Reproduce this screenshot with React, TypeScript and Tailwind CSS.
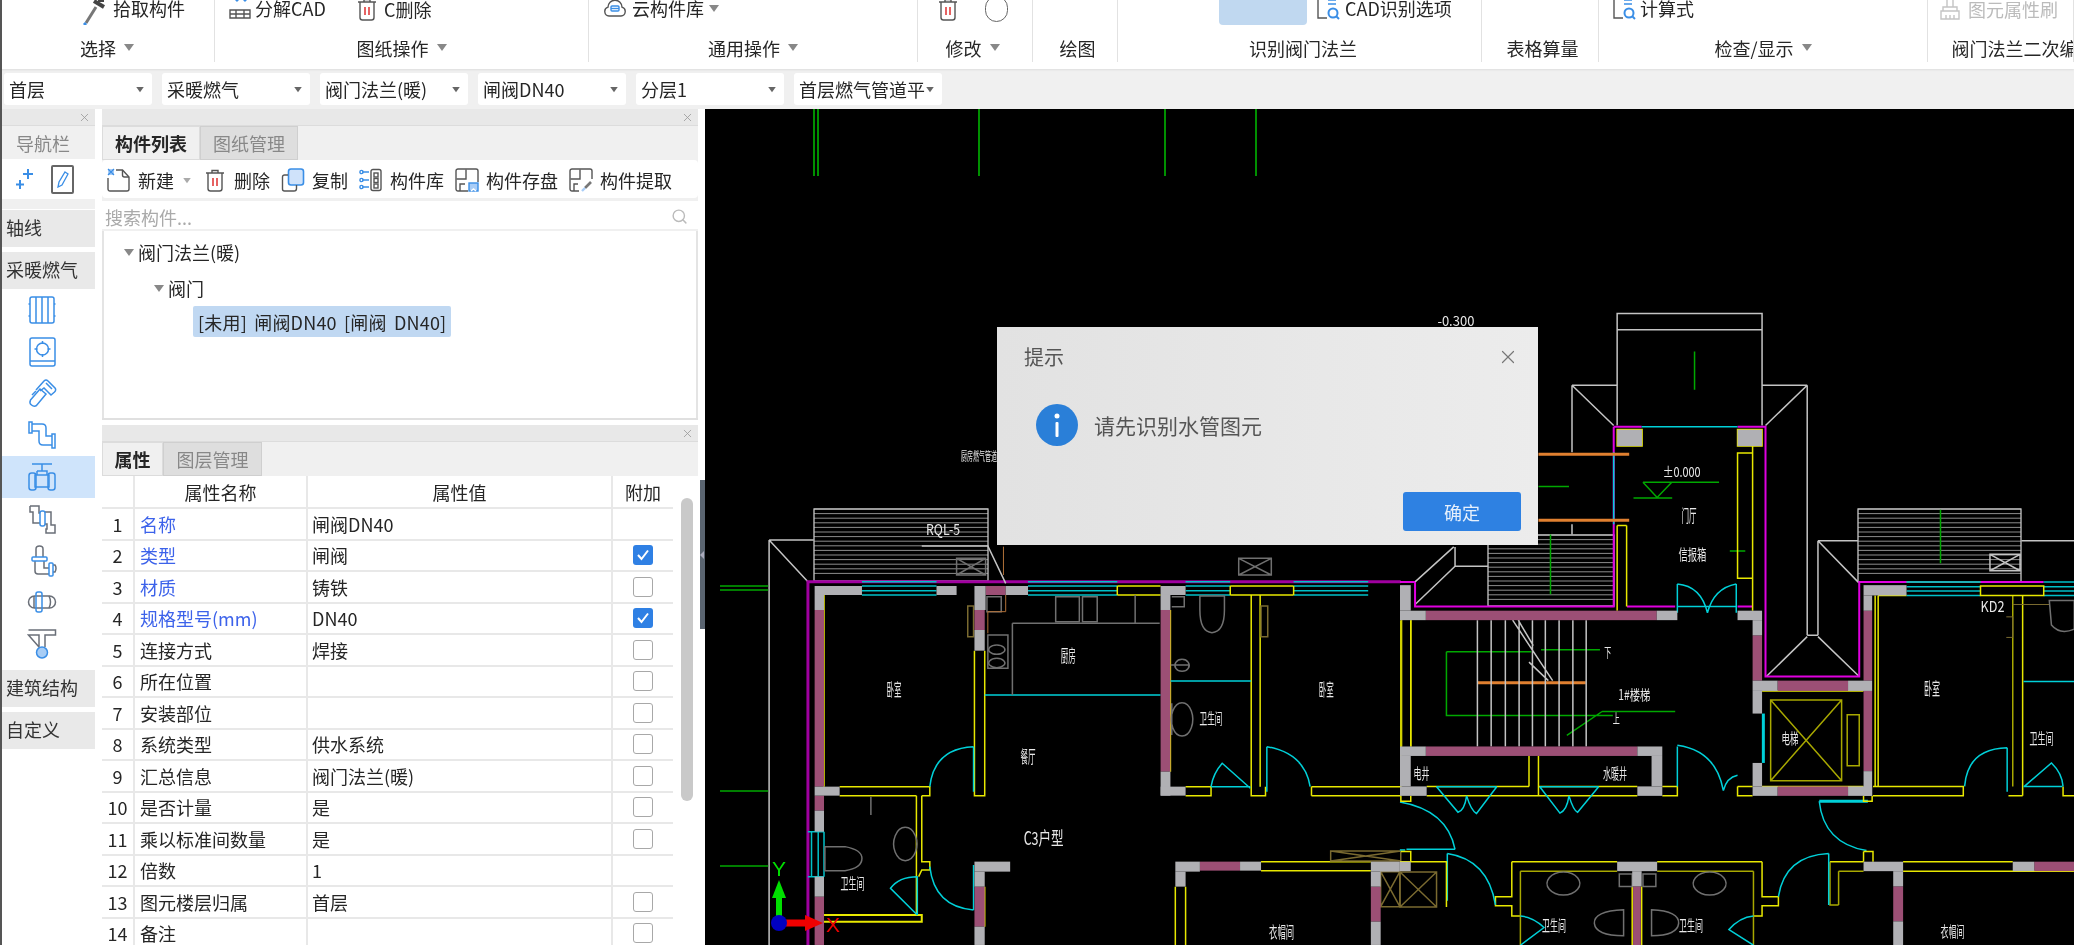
import { Search, X } from 'lucide-react';
import type { ReactNode } from 'react';

const BLUE = '#3a8ee6';
const INK = '#555';
const PIPE = '#6a6f78';

const SELECTORS = ['首层', '采暖燃气', '阀门法兰(暖)', '闸阀DN40', '分层1', '首层燃气管道平'];

const GROUPS = [
  { label: '选择', width: 215, arrow: true, cls: '' },
  { label: '图纸操作', width: 374, arrow: true, cls: '' },
  { label: '通用操作', width: 329, arrow: true, cls: '' },
  { label: '修改', width: 115, arrow: true, cls: 'pr-[5px]' },
  { label: '绘图', width: 85, arrow: false, cls: 'pl-[5px]' },
  { label: '识别阀门法兰', width: 364, arrow: false, cls: 'pl-[7px]' },
  { label: '表格算量', width: 117, arrow: false, cls: 'pl-[5px]' },
  { label: '检查/显示', width: 329, arrow: true, cls: '' },
  { label: '阀门法兰二次编辑', width: 146, arrow: false, cls: 'pl-[46px]' },
];

const ROWS: { name: string; value: string; link?: boolean; check?: boolean | null }[] = [
  { name: '名称', value: '闸阀DN40', link: true, check: null },
  { name: '类型', value: '闸阀', link: true, check: true },
  { name: '材质', value: '铸铁', link: true, check: false },
  { name: '规格型号(mm)', value: 'DN40', link: true, check: true },
  { name: '连接方式', value: '焊接', check: false },
  { name: '所在位置', value: '', check: false },
  { name: '安装部位', value: '', check: false },
  { name: '系统类型', value: '供水系统', check: false },
  { name: '汇总信息', value: '阀门法兰(暖)', check: false },
  { name: '是否计量', value: '是', check: false },
  { name: '乘以标准间数量', value: '是', check: false },
  { name: '倍数', value: '1', check: null },
  { name: '图元楼层归属', value: '首层', check: false },
  { name: '备注', value: '', check: false },
];

function Arrow({ className = 'border-t-[#888]' }: { className?: string }) {
  return <span className={`inline-block w-0 h-0 border-x-[5px] border-x-transparent border-t-[7px] ${className}`} />;
}

function Glyph({ size = 24, children }: { size?: number; children: ReactNode }) {
  return (
    <svg width={size} height={size} viewBox="0 0 24 24" fill="none" stroke={INK} strokeWidth="1.4" className="shrink-0">
      {children}
    </svg>
  );
}

// ribbon and toolbar icons
const TrashIcon = ({ size = 24 }: { size?: number }) => (
  <Glyph size={size}>
    <path d="M3 5h18M9 5V2.500h6V5M5 5v15.500A2.500 2.500 0 0 0 7.500 23h9a2.500 2.500 0 0 0 2.500-2.500V5" />
    <path d="M10 10v8M14 10v8" stroke="#e03c3c" strokeWidth="1.600" />
  </Glyph>
);

const NewIcon = () => (
  <Glyph>
    <path d="M9 2h6.500L22 9v12a2 2 0 0 1-2 2H3a2 2 0 0 1-2-2V10" />
    <path d="M15.500 2v5a2 2 0 0 0 2 2H22" />
    <rect x="1" y="1" width="6" height="6" fill="#a9cdf7" stroke="none" />
    <path d="M1 1l6 6M7 1L1 7" stroke={BLUE} strokeWidth="1.200" />
  </Glyph>
);

const CopyIcon = () => (
  <Glyph>
    <rect x="7.500" y="1" width="15" height="16" rx="2.500" fill="#cfe2fa" stroke={BLUE} strokeWidth="1.600" />
    <path d="M7 7H3.500A2 2 0 0 0 1.500 9v12a2 2 0 0 0 2 2H13a2.500 2.500 0 0 0 2.500-2.500V17" />
  </Glyph>
);

const LibraryIcon = () => (
  <Glyph>
    <rect x="12" y="1.500" width="10" height="21" rx="2" />
    <rect x="15" y="5" width="4" height="4" />
    <rect x="15" y="10.500" width="4" height="4" />
    <rect x="15" y="16" width="4" height="4" />
    <path d="M3 4h7M3 12h7M3 19h7" stroke={BLUE} strokeWidth="1.600" />
    <circle cx="2.500" cy="4" r="1.600" stroke={BLUE} />
    <circle cx="2.500" cy="12" r="1.600" stroke={BLUE} />
    <circle cx="2.500" cy="19" r="1.600" stroke={BLUE} />
  </Glyph>
);

const SaveIcon = () => (
  <Glyph>
    <path d="M13 23H3a2 2 0 0 1-2-2V3a2 2 0 0 1 2-2h18a2 2 0 0 1 2 2v11" />
    <path d="M1.500 11H11V1.500M5 23v-7h5" />
    <rect x="14" y="15" width="9" height="8" fill="#a9cdf7" stroke={BLUE} />
    <path d="M16 23l2.500-2 2.500 2" stroke="#fff" />
  </Glyph>
);

const PickIcon = () => (
  <Glyph>
    <path d="M10 23H3a2 2 0 0 1-2-2V3a2 2 0 0 1 2-2h18a2 2 0 0 1 2 2v8" />
    <path d="M1.500 11H11V1.500M5 23v-7h4" />
    <path d="M22 14l-6 6" strokeWidth="2.600" stroke="#777" />
    <path d="M16 20l-3 3" stroke="#a9cdf7" strokeWidth="2.400" />
  </Glyph>
);

const PickerIcon = () => (
  <svg width="26" height="34" viewBox="0 0 26 34" fill="none" className="shrink-0">
    <path d="M14 16L4 32" stroke="#777" strokeWidth="3" />
    <path d="M4 32l-2 2" stroke={BLUE} strokeWidth="3" />
    <path d="M12 10l10 6" stroke="#444" strokeWidth="4" />
    <path d="M16 4h6v7h-6z" fill="#444" />
  </svg>
);

const ExplodeIcon = () => (
  <Glyph>
    <path d="M2 14h20v8H2zM2 18h20M8 14v8M16 14v8" />
    <path d="M6 2l3 3 3-3M14 2l3 3 3-3" stroke={BLUE} />
  </Glyph>
);

const CloudIcon = () => (
  <Glyph>
    <path d="M6 20a4.500 4.500 0 0 1-1-8.800 7 7 0 0 1 14 0 4.500 4.500 0 0 1-1 8.800z" />
    <rect x="8" y="10" width="8" height="5" rx="1" stroke={BLUE} />
    <path d="M8 12.500h8" stroke={BLUE} />
  </Glyph>
);

const CadIcon = () => (
  <Glyph>
    <path d="M9 2H2v20h9" />
    <circle cx="17" cy="17" r="4.500" stroke={BLUE} strokeWidth="2" />
    <path d="M20 20l3 3" stroke={BLUE} strokeWidth="2" />
    <path d="M12 4h8M12 8h8" stroke={BLUE} strokeWidth="1.600" />
  </Glyph>
);

const BrushIcon = () => (
  <Glyph>
    <path d="M9 2h6v8H9zM3 14h18v8H3zM5 10h14v4H5zM8 18v4M12 18v4M16 18v4" stroke="#c4c4c4" />
  </Glyph>
);

function NavIcon({ children }: { children: ReactNode }) {
  return (
    <svg width="30" height="32" viewBox="0 0 30 32" fill="none" stroke={BLUE} strokeWidth="1.500" className="shrink-0">
      {children}
    </svg>
  );
}

const NAV_ICONS: ReactNode[] = [
  <NavIcon key="radiator">
    <rect x="3" y="3" width="24" height="26" rx="2" />
    <path d="M9 3v26M15 3v26M21 3v26M1.500 10H3M1.500 22H3M27 10h1.500M27 22h1.500" />
  </NavIcon>,
  <NavIcon key="boiler">
    <rect x="3" y="2" width="25" height="28" rx="2" />
    <path d="M3 25h25" />
    <circle cx="15.500" cy="13" r="6" />
    <path d="M15.500 5v3M15.500 18v3M7.500 13h3M20.500 13h3" />
  </NavIcon>,
  <NavIcon key="wrench">
    <path d="M3.500 23L13 12l6 5-9.500 11.500Q7 30 4.500 28T3.500 23Z" />
    <path d="M9 13l8-9q2-2 4 0l7 7q1.500 2-.5 4L24 18l-7-7-4 3" />
    <path d="M19 6l6 6M5 18l4-4" />
  </NavIcon>,
  <NavIcon key="pipe">
    <rect x="2" y="3" width="3" height="11" />
    <rect x="25" y="15" width="3" height="14" />
    <path d="M5 5h10q4 0 4 4v8h6M5 12h7v10q0 4 4 4h9" />
  </NavIcon>,
  <NavIcon key="valve">
    <path d="M5 3h20M15 3v7M10 10h10v4" />
    <path d="M10 10v4" />
    <path d="M8 14h14v12H8z" />
    <rect x="2" y="12" width="7" height="17" rx="2.500" />
    <rect x="21" y="12" width="7" height="17" rx="2.500" />
  </NavIcon>,
  <NavIcon key="double">
    <path d="M3 3h9v7h1M3 3v6h3v11h7M18 9h6v13h4v8h-9v-4h1v-5h-2" stroke={PIPE} />
    <rect x="13" y="8" width="5" height="15" rx="2" />
  </NavIcon>,
  <NavIcon key="elbow">
    <path d="M9 12V4q0-3 3.500-3T16 4v8" stroke={PIPE} />
    <path d="M8 16v10q0 3 3 3h11M17 16v7h5M26 20h2q2 3 0 7h-2" stroke={PIPE} />
    <rect x="5" y="12" width="15" height="4" rx="1" />
    <rect x="22" y="18" width="4" height="13" rx="1" />
  </NavIcon>,
  <NavIcon key="coupling">
    <rect x="1.500" y="10" width="27" height="12" rx="6" stroke={PIPE} />
    <path d="M7 10v12M22 10q3 6 0 12" stroke={PIPE} />
    <rect x="9" y="6" width="6" height="20" rx="2" />
  </NavIcon>,
  <NavIcon key="tee">
    <path d="M1.500 2h27v5H18v12M12 19V7H1.500z" stroke={PIPE} />
    <circle cx="15" cy="24.500" r="5.500" fill="#a8cdf5" />
  </NavIcon>,
];

function PanelClose() {
  return (
    <div className="h-[17px] flex items-center justify-end pr-[4px] bg-[#e8e8e8] border-b border-[#dcdcdc] shrink-0">
      <X size={13} strokeWidth={1.5} className="text-[#999]" />
    </div>
  );
}

function NavGroup({ label }: { label: string }) {
  return <div className="h-[37px] mb-[5px] pl-[4px] pb-[3px] flex items-center bg-[#e9e9e9] text-[#333]">{label}</div>;
}

function ToolItem({ icon, label, arrow }: { icon: ReactNode; label: string; arrow?: boolean }) {
  return (
    <div className="flex items-center gap-[7px] whitespace-nowrap">
      {icon}
      <span>{label}</span>
      {arrow && <Arrow className="ml-[1px] border-t-[#aaa] scale-75" />}
    </div>
  );
}

function Checkbox({ checked }: { checked: boolean }) {
  if (checked) {
    return (
      <span className="w-[20px] h-[20px] rounded-[3px] bg-[#2f80e4] flex items-center justify-center">
        <svg width="14" height="14" viewBox="0 0 14 14" fill="none" stroke="#fff" strokeWidth="2">
          <path d="M2 7l3.500 4L12 2.500" />
        </svg>
      </span>
    );
  }
  return <span className="w-[20px] h-[20px] rounded-[3px] bg-white border border-[#a8a8a8]" />;
}

/* ---- CAD drawing, coordinates are read off the two magnified crops ---- */

type Rect = [number, number, number, number];
type Stroke = [string, string, number?];

const YEL = '#e8e800';
const DIM = '#a8a800';
const CYN = '#00d0d8';
const TEAL = '#00c0c8';
const PUR = '#a000a0';
const MAG = '#e000e0';
const WHT = '#c4c4c4';
const GRY = '#707070';
const GRN = '#00a800';
const ORG = '#e08030';
const BRN = '#7a6a30';

const windowBand = (a: number, b: number, ys: number[]): Stroke[] =>
  ys.map((y) => [TEAL, `M${a} ${y}H${b}`, 1.5] as Stroke);

const cross = (a: number, b: number, c: number, d: number) => `M${a} ${b}H${c}V${d}H${a}ZM${a} ${b}L${c} ${d}M${c} ${b}L${a} ${d}`;

const LOWER_GREY: Rect[] = [
  [212, 168, 318, 195], [212, 195, 233, 240], [485, 168, 530, 195], [570, 168, 595, 240], [640, 168, 690, 195],
  [570, 300, 593, 362], [987, 168, 1043, 195], [987, 195, 1009, 240], [987, 725, 1009, 797], [987, 770, 1043, 797],
  [212, 770, 268, 797], [212, 842, 233, 905], [212, 1040, 233, 1100], [570, 995, 650, 1025], [570, 1025, 593, 1070],
  [570, 1190, 593, 1245], [1020, 995, 1075, 1025], [1020, 1025, 1043, 1070], [1165, 995, 1212, 1022],
  [1458, 995, 1523, 1025], [1458, 1025, 1480, 1070], [1458, 1175, 1480, 1245],
];
const LOWER_MAUVE: Rect[] = [
  [212, 240, 233, 770], [212, 797, 233, 842], [212, 1100, 233, 1245], [595, 168, 640, 195], [570, 240, 593, 300],
  [987, 240, 1009, 725], [570, 1070, 593, 1190], [1075, 995, 1165, 1022], [1458, 1070, 1480, 1175],
];
const LOWER_LINES: Stroke[] = [
  [WHT, 'M110 30V1245M110 30H210M110 30L197 155'],
  [GRN, 'M0 168H108M0 180H108M0 783H108M0 1008H108'],
  [PUR, 'M197 1245V155H1525', 3],
  ...windowBand(318, 485, [155, 168, 182, 195]),
  ...windowBand(690, 890, [155, 168, 182, 195]),
  ...windowBand(1043, 1143, [155, 168, 182, 195]),
  ...windowBand(1285, 1452, [155, 168, 182, 195]),
  [TEAL, 'M197 905H233M197 1040H233M205 905V1040M220 905V1040M233 905V1040', 1.5],
  [YEL, 'M890 168H987M890 195H987M890 168V195M1143 168H1285M1143 195H1285M1143 168V195M1285 168V195'],
  [YEL, 'M233 195V770M570 362V797H593V362M1190 195V797H1222V770M1210 195V770M1009 240V725'],
  [YEL, 'M268 770H470V797H452M268 797H440M440 797V1155M452 797V995H470V1020H452L445 1040'],
  [YEL, 'M1043 770H1100V797H1043M1325 770H1525M1325 797H1525M1325 770V797'],
  [YEL, 'M233 1155H452V1175H233', 2],
  [YEL, 'M1212 995H1458M1212 1022H1458M1020 1070V1245M1043 1070V1245M593 1070V1190'],
  [DIM, 'M1527 270V650M1548 270V650'],
  [CYN, 'M568 650Q480 655 470 770M568 650V785M1225 650Q1310 670 1322 770M1225 650V785'],
  [CYN, 'M1100 770Q1105 730 1125 700L1188 775M1100 770H1188M593 495H987M1009 453H1190', 1.500],
  [CYN, 'M443 1040Q400 1040 382 1075L442 1155M442 1040V1155M470 1010Q480 1130 568 1140M568 1005V1140'],
  [GRY, 'M655 280H985M655 280V495M930 195V280'],
  [GRY, 'M600 315H645V415H600ZM752 200H805V275H752ZM812 200H845V275H812ZM598 200H630V245H598ZM1012 200H1040V230H1012'],
  [GRY, 'M620 345a18 14 0 1 0 .1 0M620 385a18 14 0 1 0 .1 0M338 800V855'],
  [GRY, 'M1075 198H1130V240Q1130 305 1102 308Q1075 305 1075 240Z'],
  [GRY, 'M1035 388a16 18 0 1 0 .1 0M1010 405H1050'],
  [GRY, 'M1035 518a24 50 0 1 0 .1 0M1012 520V615'],
  [GRY, 'M415 892a26 50 0 1 0 .1 0M235 950H280Q318 960 318 985Q318 1015 280 1022H235Z'],
  [BRN, 'M555 228H568V320H555ZM1212 228H1227V320H1212ZM1368 963H1525V993H1368ZM1368 963L1525 993M1525 963L1368 993'],
  [BRN, cross(1480, 1025, 1523, 1130)],
  ['#b07038', 'M635 50V135M640 195V245H600V310', 1],
  [GRY, cross(530, 85, 595, 135)],
  [GRY, cross(1162, 85, 1235, 135)],
  [WHT, 'M452 48H600L640 160'],
  [CYN, 'M1535 960H1523'],
];

const RIGHT_GREY: Rect[] = [
  [0, 693, 25, 755], [0, 755, 60, 778], [597, 755, 645, 778], [785, 755, 842, 778], [820, 778, 842, 815],
  [820, 925, 878, 950], [820, 950, 842, 1005], [1042, 925, 1098, 950], [1078, 693, 1178, 718], [1078, 718, 1098, 755],
  [1078, 1145, 1098, 1205], [1042, 1182, 1098, 1205], [820, 1125, 842, 1182], [820, 1182, 878, 1205],
  [0, 1085, 60, 1108], [552, 1085, 610, 1108], [585, 1108, 610, 1182], [552, 1182, 610, 1205], [0, 1108, 25, 1182],
  [0, 1182, 62, 1205], [505, 315, 563, 355], [785, 315, 842, 355], [1078, 1365, 1170, 1388], [1147, 1388, 1170, 1425],
  [1147, 1510, 1170, 1568], [1425, 1365, 1475, 1388], [505, 1365, 598, 1388], [540, 1388, 562, 1425], [0, 1365, 25, 1388],
];
const RIGHT_MAUVE: Rect[] = [
  [60, 755, 597, 778], [820, 815, 842, 925], [878, 925, 1042, 950], [1078, 755, 1098, 925], [1078, 950, 1098, 1145],
  [878, 1182, 1042, 1205], [60, 1085, 552, 1108], [1147, 1425, 1170, 1510], [1475, 1365, 1568, 1388], [542, 1425, 560, 1568],
];
const RIGHT_LINES: Stroke[] = [
  [WHT, 'M505 33H842V72H505ZM505 72V305M842 72V305M400 207H505M400 207V370M400 207L497 305M842 207H947M947 207V815M947 207L850 305'],
  [WHT, 'M128 600V647H205M35 740L128 647M35 685L125 600M400 545V570M972 585H1065M972 585V815M972 585L1065 685M947 815H972M947 818L852 915M972 818L1068 915M1445 585H1568'],
  [GRN, 'M685 125V218M322 453H393M350 570V715M1257 510V640M767 610H803'],
  [GRN, 'M565 443H742M565 443L598 480L632 443M543 481H633M108 855H305M108 855V1010H495M328 850H465M470 1000H640M470 1000L388 1058'],
  [MAG, 'M497 308H562M785 308H850V915H1068V685H1178M1350 685H1497M35 685V745H497V308M528 745H640M785 745H820M0 685H35', 2],
  [CYN, 'M562 308H785M497 370V545', 1.500],
  [ORG, 'M322 375H533M322 535H533M180 930H432', 3],
  [YEL, 'M505 315H563V355H505ZM785 315H842V355H785ZM505 548H527M505 548V755M527 548V745M820 355V755M785 372H820V676H785Z'],
  [CYN, 'M645 690V760M645 690Q700 695 715 760M782 690Q730 700 715 760M782 690V760M645 745H782'],
  [WHT, 'M180 778V1085M212 778V1085M245 778V1085M277 778V1085M308 778V1085M338 778V1085M370 778V1085M402 778V1085M433 778V1085M262 778L355 925M275 778L310 840M300 880L345 925'],
  [YEL, 'M2 778V1205M25 778V1085M1105 718V1182M1112 718V1182M1112 718H1178M1100 1182H1310V1205H1100M1415 1205H1448M1448 718V1205M1542 1182V1205H1568'],
  [DIM, 'M1425 718V1182'],
  [CYN, 'M1313 1182Q1320 1090 1412 1088M1412 1088V1195M1452 1182L1515 1125Q1540 1150 1542 1182M1450 1182H1540M1450 927H1568'],
  [TEAL, 'M1178 685H1350M1178 697H1350M1178 707H1350M1178 718H1350M1497 685H1568M1497 697H1568M1497 707H1568M1497 718H1568', 1.5],
  [YEL, 'M1350 695H1497V718H1350Z'],
  [WHT, cross(1372, 618, 1442, 658)],
  [YEL, 'M300 1108V1182M322 1108V1205M62 1182H300M322 1182H552M62 1205H552M610 1182H645V1205H610M785 1182H820M785 1182V1205H820'],
  [CYN, 'M85 1183H225M325 1183H462M85 1183L135 1245Q150 1240 155 1205Q165 1240 178 1248L225 1183M325 1183L372 1247Q388 1240 393 1205Q403 1240 413 1245L462 1183'],
  [CYN, 'M645 1182V1085M645 1082Q735 1095 752 1192M752 1192Q760 1160 785 1155'],
  [DIM, `${cross(862, 972, 1027, 1168)}M1040 1008H1068V1132H1040Z`],
  [YEL, 'M842 950H1078M842 1182H1078'],
  [CYN, 'M845 1005V1125', 3],
  [CYN, 'M975 1218H1088', 3],
  [CYN, 'M975 1218Q985 1320 1085 1338'],
  [YEL, 'M1078 1205V1218H1098V1205M1078 1340H1100V1365M1078 1340V1365M1000 1365H1078M1170 1365H1425M1170 1388H1568'],
  [DIM, 'M1020 1388H1078M1020 1388V1470M1000 1365V1470H1020'],
  [YEL, 'M260 1365H505M598 1365H842M842 1365V1450H880V1472H842V1497H822M260 1365V1450H222V1472H260V1497H280M540 1425V1568M562 1425V1568'],
  [DIM, 'M280 1388H505M598 1388H822M280 1388V1568M822 1388V1568'],
  [CYN, 'M880 1450Q895 1350 997 1345M997 1345V1470M110 1345Q205 1360 222 1470M110 1345V1460M15 1335H128M0 1220Q110 1240 128 1335'],
  [CYN, 'M280 1497Q310 1500 335 1525L280 1568M822 1497Q790 1500 765 1530L822 1568'],
  [YEL, 'M2 1205V1218H25V1205M2 1340H25V1365M0 1365H108V1475'],
  [BRN, cross(0, 1390, 85, 1475)],
  [GRY, 'M380 1390a38 28 0 1 0 .1 0M720 1390a38 28 0 1 0 .1 0M510 1395H540V1425H510ZM565 1395H595V1425H565ZM520 1482Q450 1485 452 1515Q455 1545 520 1545ZM585 1482Q650 1485 648 1515Q645 1545 585 1545Z'],
  [BRN, 'M1510 740H1425M1410 770H1425V820H1410', 1],
  [GRY, 'M1510 730H1568V800Q1535 815 1515 790Z'],
];

const z6 = (x: number, y: number): [number, number] => [1400 + x * 0.43, 300 + y * 0.4115];
const z7 = (x: number, y: number): [number, number] => [720 + x * 0.4464, 530 + y * 0.3333];

const DRAW_TEXT: { at: [number, number]; w: number; h: number; t: string }[] = [
  { at: z7(390, 480), w: 15, h: 17, t: '卧室' },
  { at: z7(780, 378), w: 15, h: 17, t: '厨房' },
  { at: z7(1358, 480), w: 15, h: 17, t: '卧室' },
  { at: z7(1100, 565), w: 23, h: 15, t: '卫生间' },
  { at: z7(690, 680), w: 15, h: 17, t: '餐厅' },
  { at: z7(297, 1060), w: 24, h: 15, t: '卫生间' },
  { at: z7(1258, 1205), w: 25, h: 16, t: '衣帽间' },
  { at: z6(358, 1520), w: 24, h: 15, t: '卫生间' },
  { at: z6(677, 1520), w: 24, h: 15, t: '卫生间' },
  { at: z6(500, 1150), w: 24, h: 15, t: '水暖井' },
  { at: z6(50, 1150), w: 16, h: 15, t: '电井' },
  { at: z6(545, 960), w: 32, h: 14, t: '1#楼梯' },
  { at: z6(1237, 945), w: 16, h: 17, t: '卧室' },
  { at: z6(1492, 1065), w: 24, h: 15, t: '卫生间' },
  { at: z6(907, 1065), w: 17, h: 15, t: '电梯' },
  { at: z6(1285, 1535), w: 24, h: 15, t: '衣帽间' },
  { at: z6(672, 525), w: 15, h: 17, t: '门厅' },
  { at: z6(680, 617), w: 28, h: 15, t: '信报箱' },
  { at: z6(655, 418), w: 38, h: 14, t: '±0.000' },
  { at: z6(130, 50), w: 37, h: 14, t: '-0.300' },
  { at: z6(1378, 745), w: 24, h: 15, t: 'KD2' },
  { at: z6(483, 855), w: 7, h: 13, t: '下' },
  { at: z6(503, 1015), w: 7, h: 13, t: '上' },
  { at: [979, 456], w: 36, h: 12, t: '厨房燃气管道' },
  { at: [943, 529], w: 34, h: 15, t: 'RQL-5' },
  { at: z7(725, 925), w: 40, h: 18, t: 'C3户型' },
];

function Layer({ transform, grey, mauve, lines }: { transform: string; grey: Rect[]; mauve: Rect[]; lines: Stroke[] }) {
  return (
    <g transform={transform}>
      {lines.map(([color, d, width], i) => (
        <path key={i} d={d} fill="none" stroke={color} strokeWidth={width ?? 1.5} vectorEffect="non-scaling-stroke" />
      ))}
      {mauve.map(([a, b, c, d], i) => (
        <rect key={i} x={a} y={b} width={c - a} height={d - b} fill="#9c4f75" />
      ))}
      {grey.map(([a, b, c, d], i) => (
        <rect key={i} x={a} y={b} width={c - a} height={d - b} fill="#b0b0b4" />
      ))}
    </g>
  );
}

function Hatch({ x, y, w, h }: { x: number; y: number; w: number; h: number }) {
  const rows = Array.from({ length: Math.floor(h / 4.6) }, (_, i) => y + i * 4.6);
  return (
    <g>
      {rows.map((ry) => (
        <path key={ry} d={`M${x} ${ry}h${w}`} stroke="#8c8c8c" strokeWidth="1" />
      ))}
      <rect x={x} y={y} width={w} height={h} fill="none" stroke="#c8c8c8" strokeWidth="1.300" />
    </g>
  );
}

function CadDrawing() {
  return (
    <svg viewBox="705 109 1369 836" className="block w-full h-full bg-black">
      {[814, 818, 979, 1165, 1256].map((x) => (
        <path key={x} d={`M${x} 109V176`} stroke="#009000" strokeWidth="2" />
      ))}
      <Hatch x={814} y={509} w={174} h={72} />
      <Hatch x={1488} y={535} w={126} h={71} />
      <Hatch x={1858} y={509} w={163} h={73} />
      <Layer transform="translate(720 530) scale(0.4464 0.3333)" grey={LOWER_GREY} mauve={LOWER_MAUVE} lines={LOWER_LINES} />
      <Layer transform="translate(1400 300) scale(0.43 0.4115)" grey={RIGHT_GREY} mauve={RIGHT_MAUVE} lines={RIGHT_LINES} />
      {DRAW_TEXT.map(({ at, w, h, t }) => (
        <text
          key={`${t}${at[0]}`}
          x={at[0] - w / 2}
          y={at[1] + h * 0.38}
          fontSize={h}
          fill="#e8e8e8"
          textLength={w}
          lengthAdjust="spacingAndGlyphs"
          fontFamily="'Noto Sans CJK SC', sans-serif"
        >
          {t}
        </text>
      ))}
      {/* UCS axis marker */}
      <path d="M779 923V898" stroke="#00e000" strokeWidth="6" />
      <path d="M779 880l-7 18h14z" fill="#00e000" />
      <path d="M779 923h26" stroke="#f00000" strokeWidth="7" />
      <path d="M823 923l-18-8v16z" fill="#f00000" />
      <circle cx="779" cy="923" r="8" fill="#0000c0" />
      <text x="772" y="876" fontSize="21" fill="#00e000" fontFamily="'Liberation Sans', sans-serif" fontWeight="300">Y</text>
      <text x="826" y="932" fontSize="21" fill="#f00000" fontFamily="'Liberation Sans', sans-serif" fontWeight="300">X</text>
    </svg>
  );
}

export default function App() {
  return (
    <div className="w-[2074px] h-[945px] overflow-hidden flex flex-col bg-[#f0f0f0] text-[18px] leading-none text-[#262626] font-['Noto_Sans_CJK_SC','Noto_Sans',sans-serif] border-l-2 border-[#555] blur-[0.4px]">
      {/* Ribbon, cut off at the top of the screenshot */}
      <div className="h-[69px] shrink-0 bg-white flex shadow-[0_1px_2px_#ddd] -ml-[2px] relative">
        {GROUPS.map((g) => (
          <div
            key={g.label}
            style={{ width: g.width }}
            className={`h-[62px] flex items-end justify-center gap-[8px] pb-[5px] border-r border-[#e2e2e2] shrink-0 whitespace-nowrap overflow-hidden ${g.cls}`}
          >
            <span>{g.label}</span>
            {g.arrow && <span className="mb-[5px]"><Arrow /></span>}
          </div>
        ))}
        {/* Ribbon buttons sit over the group cells */}
        <div className="absolute left-[82px] -top-[9px] flex items-center gap-[5px]"><PickerIcon /><span>拾取构件</span></div>
        <div className="absolute left-[228px] -top-[4px] flex items-center gap-[3px]"><ExplodeIcon /><span>分解CAD</span></div>
        <div className="absolute left-[355px] -top-[3px] flex items-center gap-[5px]"><TrashIcon /><span>C删除</span></div>
        <div className="absolute left-[603px] -top-[4px] flex items-center gap-[5px]"><CloudIcon /><span>云构件库</span><Arrow /></div>
        <div className="absolute left-[936px] -top-[3px]"><TrashIcon /></div>
        <span className="absolute left-[985px] -top-[4px] w-[23px] h-[26px] rounded-full border border-[#666]" />
        <div className="absolute left-[1219px] top-0 w-[88px] h-[25px] rounded-b-[4px] bg-[#c0d8f0]" />
        <div className="absolute left-[1316px] -top-[4px] flex items-center gap-[5px]"><CadIcon /><span>CAD识别选项</span></div>
        <div className="absolute left-[1612px] -top-[4px] flex items-center gap-[4px]"><CadIcon /><span>计算式</span></div>
        <div className="absolute left-[1938px] -top-[3px] flex items-center gap-[6px] text-[#bbb]"><BrushIcon /><span>图元属性刷</span></div>
      </div>

      {/* Selector row */}
      <div className="h-[40px] shrink-0 flex items-center gap-[10px] pl-[2px]">
        {SELECTORS.map((s) => (
          <div key={s} className="h-[32px] w-[148px] bg-white rounded-[3px] flex items-center justify-between pl-[5px] pr-[7px] whitespace-nowrap">
            <span>{s}</span>
            <Arrow className="border-t-[#666] scale-75" />
          </div>
        ))}
      </div>

      <div className="flex-1 flex min-h-0">
        {/* Navigation bar */}
        <div className="w-[93px] shrink-0 flex flex-col bg-white">
          <PanelClose />
          <div className="h-[33px] pl-[14px] flex items-center bg-[#f0f0f0] text-[#888]">导航栏</div>
          <div className="h-[40px] flex items-center gap-[16px] pl-[13px] bg-white rounded-[4px]">
            <svg width="20" height="24" viewBox="0 0 20 24" fill="none" stroke={BLUE} strokeWidth="2">
              <path d="M13 2v10M8 7h10M5 13v9M1 17.500h8" />
            </svg>
            <span className="w-[23px] h-[29px] rounded-[2px] border-2 border-[#666] flex items-center justify-center">
              <svg width="14" height="18" viewBox="0 0 14 18" fill="none" stroke={BLUE} strokeWidth="1.300">
                <path d="M9 2l3 2-6 11-4 2 1-5z" />
              </svg>
            </span>
          </div>
          <div className="h-[10px] bg-[#f0f0f0] mb-[1px]" />
          <NavGroup label="轴线" />
          <div className="h-[37px] pl-[4px] pb-[3px] flex items-center bg-[#e9e9e9] text-[#333]">采暖燃气</div>
          <div className="flex flex-col">
            {NAV_ICONS.map((icon, i) => (
              <div key={i} className={`h-[41.8px] pl-[25px] flex items-center ${i === 4 ? 'bg-[#cfe4fb]' : ''}`}>
                {icon}
              </div>
            ))}
          </div>
          <div className="h-[5px]" />
          <NavGroup label="建筑结构" />
          <NavGroup label="自定义" />
        </div>

        <div className="w-[7px] shrink-0 bg-white" />

        {/* Component list + properties */}
        <div className="w-[596px] shrink-0 flex flex-col gap-[5px] bg-white">
          <div className="h-[311px] flex flex-col border-b-2 border-[#e0e0e0] shrink-0 bg-[#f0f0f0]">
            <PanelClose />
            <div className="h-[34px] flex shrink-0">
              <div className="w-[98px] flex items-center justify-center font-semibold bg-[#f0f0f0] border border-[#dcdcdc]">构件列表</div>
              <div className="w-[98px] flex items-center justify-center bg-[#dedede] border border-[#cfcfcf] text-[#888]">图纸管理</div>
            </div>
            <div className="h-[38px] shrink-0 flex items-center gap-[11px] pl-[5px] pt-[2px] bg-white rounded-[4px]">
              <ToolItem icon={<NewIcon />} label="新建" arrow />
              <ToolItem icon={<TrashIcon />} label="删除" />
              <ToolItem icon={<CopyIcon />} label="复制" />
              <ToolItem icon={<LibraryIcon />} label="构件库" />
              <ToolItem icon={<SaveIcon />} label="构件存盘" />
              <ToolItem icon={<PickIcon />} label="构件提取" />
            </div>
            <div className="h-[28px] mt-[3px] shrink-0 flex items-center justify-between pl-[3px] pr-[10px] pt-[3px] bg-white text-[#aaa]">
              <span>搜索构件...</span>
              <Search size={17} className="text-[#bbb]" />
            </div>
            <div className="flex-1 mt-[2px] bg-white border-x-2 border-[#e4e4e4] pt-[3px]">
              <div className="h-[36px] pl-[20px] flex items-center gap-[4px]">
                <Arrow />
                <span>阀门法兰(暖)</span>
              </div>
              <div className="h-[36px] pl-[50px] flex items-center gap-[4px]">
                <Arrow />
                <span>阀门</span>
              </div>
              <div className="pl-[89px]">
                <span className="inline-flex h-[31px] items-center px-[5px] rounded-[2px] bg-[#c0d8f2] tracking-[0.2px] [word-spacing:3px] whitespace-pre">[未用] 闸阀DN40 [闸阀 DN40]</span>
              </div>
            </div>
          </div>

          <div className="flex-1 min-h-0 flex flex-col bg-[#f0f0f0] overflow-hidden">
            <PanelClose />
            <div className="h-[34px] flex shrink-0">
              <div className="w-[61px] flex items-center justify-center font-semibold border border-[#dcdcdc]">属性</div>
              <div className="w-[99px] flex items-center justify-center bg-[#dedede] border border-[#cfcfcf] text-[#888]">图层管理</div>
            </div>
            <div className="flex-1 min-h-0 flex bg-white">
              <div className="w-[571px] shrink-0">
                <div className="h-[33px] flex border-b-2 border-[#e8e8e8] text-center">
                  <div className="w-[33px] border-r-2 border-[#e8e8e8]" />
                  <div className="w-[173px] border-r-2 border-[#e8e8e8] flex items-center justify-center">属性名称</div>
                  <div className="w-[305px] border-r-2 border-[#e8e8e8] flex items-center justify-center">属性值</div>
                  <div className="w-[60px] flex items-center justify-center">附加</div>
                </div>
                {ROWS.map((r, i) => (
                  <div key={r.name} className="h-[31.5px] flex border-b-2 border-[#e8e8e8]">
                    <div className="w-[33px] border-r-2 border-[#e8e8e8] flex items-center justify-center">{i + 1}</div>
                    <div className={`w-[173px] border-r-2 border-[#e8e8e8] flex items-center pl-[5px] whitespace-nowrap ${r.link ? 'text-[#3c62ea]' : ''}`}>{r.name}</div>
                    <div className="w-[305px] border-r-2 border-[#e8e8e8] flex items-center pl-[4px]">{r.value}</div>
                    <div className="w-[60px] flex items-center justify-center">
                      {r.check !== null && r.check !== undefined && <Checkbox checked={r.check} />}
                    </div>
                  </div>
                ))}
              </div>
              <div className="flex-1 pl-[8px] pt-[22px]">
                <div className="w-[12px] h-[303px] rounded-full bg-[#c9c9c9]" />
              </div>
            </div>
          </div>
        </div>

        {/* Splitter handle between panels and canvas */}
        <div className="w-[7px] shrink-0 bg-white pt-[371px]">
          <div className="h-[149px] ml-[2px] bg-[#5a6470] flex items-center">
            <span className="w-0 h-0 border-y-[4px] border-y-transparent border-r-[4px] border-r-[#aab]" />
          </div>
        </div>

        {/* Drawing canvas with the prompt dialog on top */}
        <div className="flex-1 relative min-w-0">
          <CadDrawing />
          <div className="absolute left-[292px] top-[218px] w-[541px] h-[218px] bg-linear-to-r from-[#e2e2e2] to-[#ececec] flex flex-col">
            <div className="h-[60px] shrink-0 flex items-center justify-between pl-[27px] pr-[19px] text-[20px] text-[#555]">
              <span>提示</span>
              <X size={22} strokeWidth={1.3} className="text-[#777]" />
            </div>
            <div className="flex items-center gap-[16px] pl-[39px] pt-[17px] text-[21px] text-[#555]">
              <span className="w-[42px] h-[42px] rounded-full bg-[#2a7fd8] flex items-center justify-center">
                <svg width="8" height="26" viewBox="0 0 8 26" fill="#fff">
                  <circle cx="4" cy="4" r="2.500" />
                  <rect x="2.500" y="10" width="3" height="15" rx="1" />
                </svg>
              </span>
              <span>请先识别水管图元</span>
            </div>
            <div className="flex-1 flex items-end justify-end pr-[17px] pb-[14px]">
              <div className="w-[118px] h-[39px] rounded-[3px] bg-[#2e81e2] text-[#e6f0fc] text-[18px] flex items-center justify-center">确定</div>
            </div>
          </div>
        </div>
      </div>
    </div>
  );
}
